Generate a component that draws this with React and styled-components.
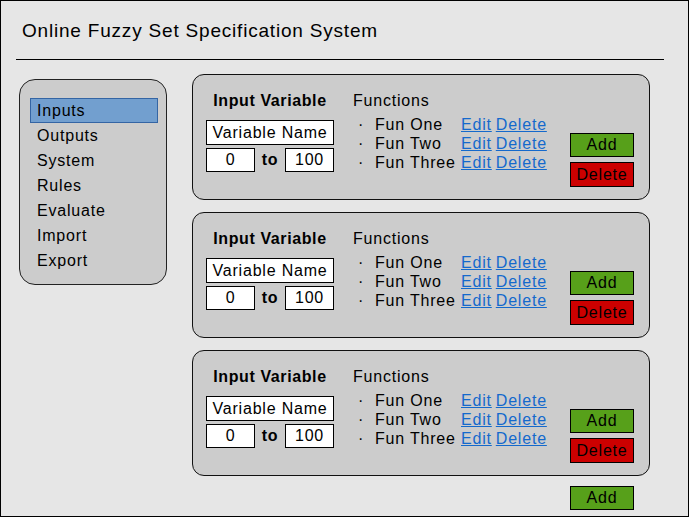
import React from "react";
import styled, { createGlobalStyle } from "styled-components";

const GlobalStyle = createGlobalStyle`
  html, body {
    margin: 0;
    padding: 0;
    background: #e6e6e6;
  }
  * {
    box-sizing: border-box;
  }
`;

const Frame = styled.div`
  width: 689px;
  height: 517px;
  border: 1px solid #000;
  background: #e6e6e6;
  font-family: "Liberation Sans", Arial, sans-serif;
  letter-spacing: 0.8px;
  color: #000;
  overflow: hidden;
`;

const Title = styled.h1`
  margin: 0;
  padding: 19px 0 0 21px;
  font-size: 19px;
  line-height: 22px;
  font-weight: normal;
`;

const Rule = styled.div`
  margin: 17px 0 0 15px;
  width: 648px;
  height: 1px;
  background: #000;
`;

const Main = styled.div`
  display: flex;
  align-items: flex-start;
  gap: 25px;
  padding: 14px 0 0 18px;
`;

const Sidebar = styled.nav`
  margin-top: 5px;
  width: 148px;
  height: 206px;
  padding: 18px 0 0 10px;
  background: #cccccc;
  border: 1px solid #222;
  border-radius: 16px;
`;

const NavItem = styled.div`
  width: 128px;
  height: 25px;
  padding-left: 6px;
  font-size: 16px;
  line-height: 23px;
  border: 1px solid ${(p) => (p.$active ? "#3465a4" : "transparent")};
  background: ${(p) => (p.$active ? "#729fcf" : "transparent")};
`;

const Content = styled.div`
  display: flex;
  flex-direction: column;
  gap: 12px;
`;

const Card = styled.section`
  width: 458px;
  height: 126px;
  display: flex;
  padding: 17px 0 0 13px;
  background: #cccccc;
  border: 1px solid #111;
  border-radius: 12px;
`;

const VarColumn = styled.div`
  width: 128px;
  display: flex;
  flex-direction: column;
`;

const VarTitle = styled.div`
  font-size: 16px;
  font-weight: bold;
  letter-spacing: 0.6px;
  line-height: 18px;
  text-align: center;
  margin-bottom: 10px;
`;

const Field = styled.div`
  width: ${(p) => p.$w}px;
  height: ${(p) => p.$h || 25}px;
  background: #fff;
  border: 1px solid #000;
  font-size: 16px;
  line-height: ${(p) => (p.$h || 25) - 2}px;
  text-align: center;
`;

const RangeRow = styled.div`
  display: flex;
  align-items: center;
  margin-top: 3px;
`;

const To = styled.span`
  flex: 1;
  text-align: center;
  font-size: 16px;
  font-weight: bold;
`;

const FunColumn = styled.div`
  margin-left: 19px;
  width: 217px;
`;

const FunTitle = styled.div`
  font-size: 16px;
  line-height: 18px;
  margin-bottom: 5px;
`;

const FunRow = styled.div`
  display: flex;
  font-size: 16px;
  line-height: 19px;
  white-space: nowrap;
`;

const Bullet = styled.span`
  width: 22px;
  padding-left: 5px;
`;

const FunName = styled.span`
  width: 86px;
`;

const Link = styled.a`
  color: #1469cc;
  text-decoration: underline;
  margin-right: 4px;
  cursor: pointer;
`;

const Buttons = styled.div`
  margin-top: 41px;
  display: flex;
  flex-direction: column;
  gap: 5px;
`;

const Button = styled.button`
  width: 64px;
  height: ${(p) => (p.$tall ? 25 : 24)}px;
  padding: 0;
  border: 1px solid #000;
  background: ${(p) => (p.$danger ? "#cc0000" : "#57a01a")};
  color: #000;
  font-family: "Liberation Sans", Arial, sans-serif;
  font-size: 16px;
  letter-spacing: 0.8px;
  line-height: 20px;
`;

const Footer = styled.div`
  display: flex;
  justify-content: flex-end;
  padding: 10px 54px 0 0;
`;

const navItems = ["Inputs", "Outputs", "System", "Rules", "Evaluate", "Import", "Export"];
const funs = ["Fun One", "Fun Two", "Fun Three"];

function VariableCard() {
  return (
    <Card>
      <VarColumn>
        <VarTitle>Input Variable</VarTitle>
        <Field $w={128}>Variable Name</Field>
        <RangeRow>
          <Field $w={49} $h={24}>0</Field>
          <To>to</To>
          <Field $w={49} $h={24}>100</Field>
        </RangeRow>
      </VarColumn>
      <FunColumn>
        <FunTitle>Functions</FunTitle>
        {funs.map((f) => (
          <FunRow key={f}>
            <Bullet>·</Bullet>
            <FunName>{f}</FunName>
            <Link>Edit</Link>
            <Link>Delete</Link>
          </FunRow>
        ))}
      </FunColumn>
      <Buttons>
        <Button>Add</Button>
        <Button $danger $tall>Delete</Button>
      </Buttons>
    </Card>
  );
}

export default function App() {
  return (
    <>
      <GlobalStyle />
      <Frame>
        <Title>Online Fuzzy Set Specification System</Title>
        <Rule />
        <Main>
          <Sidebar>
            {navItems.map((n, i) => (
              <NavItem key={n} $active={i === 0}>
                {n}
              </NavItem>
            ))}
          </Sidebar>
          <Content>
            <VariableCard />
            <VariableCard />
            <VariableCard />
          </Content>
        </Main>
        <Footer>
          <Button>Add</Button>
        </Footer>
      </Frame>
    </>
  );
}
